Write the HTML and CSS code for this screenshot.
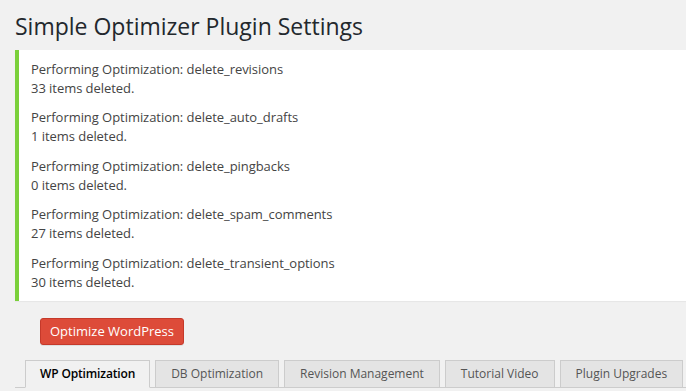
FILE: index.html
```html
<!DOCTYPE html>
<html lang="en">
<head>
  <meta charset="UTF-8">
  <title>Simple Optimizer Plugin Settings</title>
  <link rel="stylesheet" href="styles.css">
</head>
<body>
  <div class="wrap">
    <h2 class="page-title">Simple Optimizer Plugin Settings</h2>

    <div class="notice">
      <p>Performing Optimization: delete_revisions<br>33 items deleted.</p>
      <p>Performing Optimization: delete_auto_drafts<br>1 items deleted.</p>
      <p>Performing Optimization: delete_pingbacks<br>0 items deleted.</p>
      <p>Performing Optimization: delete_spam_comments<br>27 items deleted.</p>
      <p>Performing Optimization: delete_transient_options<br>30 items deleted.</p>
    </div>

    <div class="actions">
      <button class="btn-red" type="button">Optimize WordPress</button>
    </div>

    <!-- settings tabs -->
    <div class="nav-tab-wrapper">
      <a class="nav-tab nav-tab-active" href="#">WP Optimization</a>
      <a class="nav-tab" href="#">DB Optimization</a>
      <a class="nav-tab" href="#">Revision Management</a>
      <a class="nav-tab" href="#">Tutorial Video</a>
      <a class="nav-tab" href="#">Plugin Upgrades</a>
    </div>
  </div>
</body>
</html>
```

FILE: styles.css
```css
/* ---- admin page base ---- */
body {
  margin: 0; background: #f1f1f1;
  color: #444; font-family: "Open Sans", sans-serif; font-size: 13px;
  overflow: hidden;
}
.wrap { padding-left: 15px; margin-right: -20px; }

.page-title {
  margin: 0 0 9px; padding-top: 12px;
  font-size: 23px; font-weight: 400; line-height: 29px; color: #23282d;
}

/* success notice */
.notice {
  background: #fff; border-left: 4px solid #7ad03a;
  box-shadow: 0 1px 1px rgba(0,0,0,0.04);
  padding: 1px 10px;
}
.notice p { margin: 6.5px 0; padding: 2px; line-height: 19px; letter-spacing: -0.05px; }

/* red action button */
.actions { padding: 17px 0 15px 25px; }
.btn-red {
  height: 27px; padding: 0 9px; line-height: 25px;
  font-family: inherit; font-size: 13px; color: #fff;
  background: #dd4b39; border: 1px solid #c5392a; border-radius: 3px;
  box-shadow: 0 1px 0 rgba(0,0,0,0.08);
}

/* tabs */
.nav-tab-wrapper {
  display: flex; gap: 5px; padding-left: 10px;
  border-bottom: 1px solid #ccc;
}
.nav-tab {
  display: block; margin-bottom: -1px;
  padding: 1px 15px; line-height: 24px; font-size: 12px;
  border: 1px solid #ccc;
  background: #e4e4e4; color: #555; text-decoration: none;
}
.nav-tab-active {
  padding: 1px 14px; letter-spacing: -0.15px;
  background: #f1f1f1; border-bottom-color: #f1f1f1;
  color: #000; font-weight: 600;
}
```
